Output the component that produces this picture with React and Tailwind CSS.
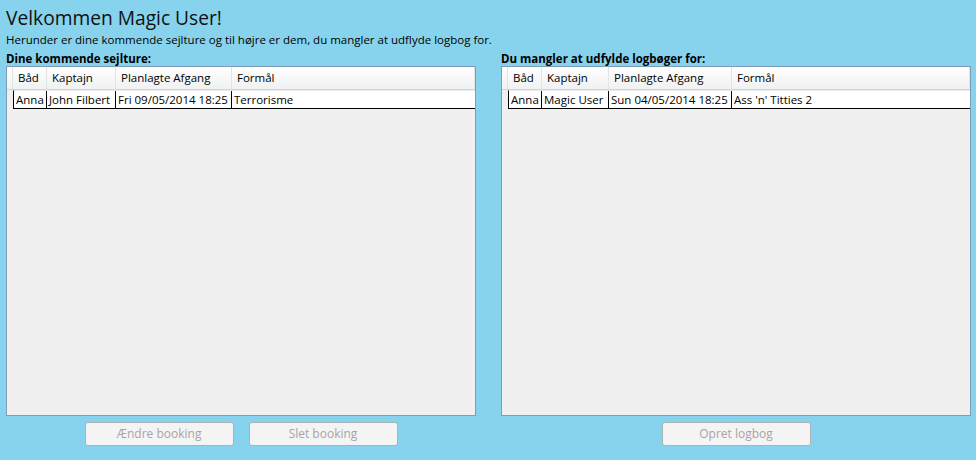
import React from 'react';

const LEFT_COLS = [
  { key: 'boat', label: 'Båd', w: 'w-[34px]' },
  { key: 'captain', label: 'Kaptajn', w: 'w-[69px]' },
  { key: 'departure', label: 'Planlagte Afgang', w: 'w-[116px]' },
  { key: 'purpose', label: 'Formål', w: 'w-[243px]' },
];

const RIGHT_COLS = [
  { key: 'boat', label: 'Båd', w: 'w-[34px]' },
  { key: 'captain', label: 'Kaptajn', w: 'w-[67px]' },
  { key: 'departure', label: 'Planlagte Afgang', w: 'w-[123px]' },
  { key: 'purpose', label: 'Formål', w: 'w-[238px]' },
];

const upcoming = [
  { boat: 'Anna', captain: 'John Filbert', departure: 'Fri 09/05/2014 18:25', purpose: 'Terrorisme' },
];

const missingLogs = [
  { boat: 'Anna', captain: 'Magic User', departure: 'Sun 04/05/2014 18:25', purpose: "Ass 'n' Titties 2" },
];

const DataGrid = ({ cols, rows }) => (
  <div className="h-[350px] border border-[#7f9db9] bg-[#f0f0f0] overflow-hidden">
    {/* header */}
    <div className="flex h-[23px] bg-gradient-to-b from-white to-[#f0f1f2] border-b border-[#d5d5d5]">
      <div className="w-[6px] shrink-0 border-r border-[#e3e3e3]" />
      {cols.map((c) => (
        <div key={c.key} className={`${c.w} shrink-0 px-[5px] flex items-center border-r border-[#e3e3e3] text-black`}>
          {c.label}
        </div>
      ))}
    </div>
    {rows.map((r, i) => (
      <div key={i} className="flex h-[19px]">
        <div className="w-[6px] shrink-0 bg-[#f0f0f0]" />
        <div className="flex bg-white border border-black border-t-[#e8e8e8]">
          {cols.map((c, j) => (
            <div
              key={c.key}
              className={`${j === 0 ? 'w-[33px]' : c.w} shrink-0 px-[2px] flex items-center whitespace-nowrap ${j < cols.length - 1 ? 'border-r border-black' : ''}`}
            >
              {r[c.key]}
            </div>
          ))}
        </div>
      </div>
    ))}
  </div>
);

const Btn = ({ children }) => (
  <button
    disabled
    className="w-[149px] h-[24px] rounded-[3px] border border-[#adb2b5] bg-[#f4f4f4] text-[#a8a4a4] text-[12px]"
  >
    {children}
  </button>
);

export default function App() {
  return (
    <div
      className="w-[976px] h-[460px] bg-[#87d3ed] px-[6px] pt-[4px] text-[11.5px] text-black overflow-hidden"
      style={{ fontFamily: '"Open Sans", "Noto Sans", sans-serif' }}
    >
      <h1 className="text-[19.2px] leading-[28px] text-[#111]">Velkommen Magic User!</h1>
      <p className="leading-[16px]">Herunder er dine kommende sejlture og til højre er dem, du mangler at udflyde logbog for.</p>

      <div className="flex gap-[25px] mt-[3px]">
        <div className="w-[470px]">
          <div className="font-bold leading-[15px]">Dine kommende sejlture:</div>
          <DataGrid cols={LEFT_COLS} rows={upcoming} />
          <div className="flex justify-center gap-[15px] mt-[6px]">
            <Btn>Ændre booking</Btn>
            <Btn>Slet booking</Btn>
          </div>
        </div>
        <div className="w-[470px]">
          <div className="font-bold leading-[15px]">Du mangler at udfylde logbøger for:</div>
          <DataGrid cols={RIGHT_COLS} rows={missingLogs} />
          <div className="flex justify-center mt-[6px]">
            <Btn>Opret logbog</Btn>
          </div>
        </div>
      </div>
    </div>
  );
}
